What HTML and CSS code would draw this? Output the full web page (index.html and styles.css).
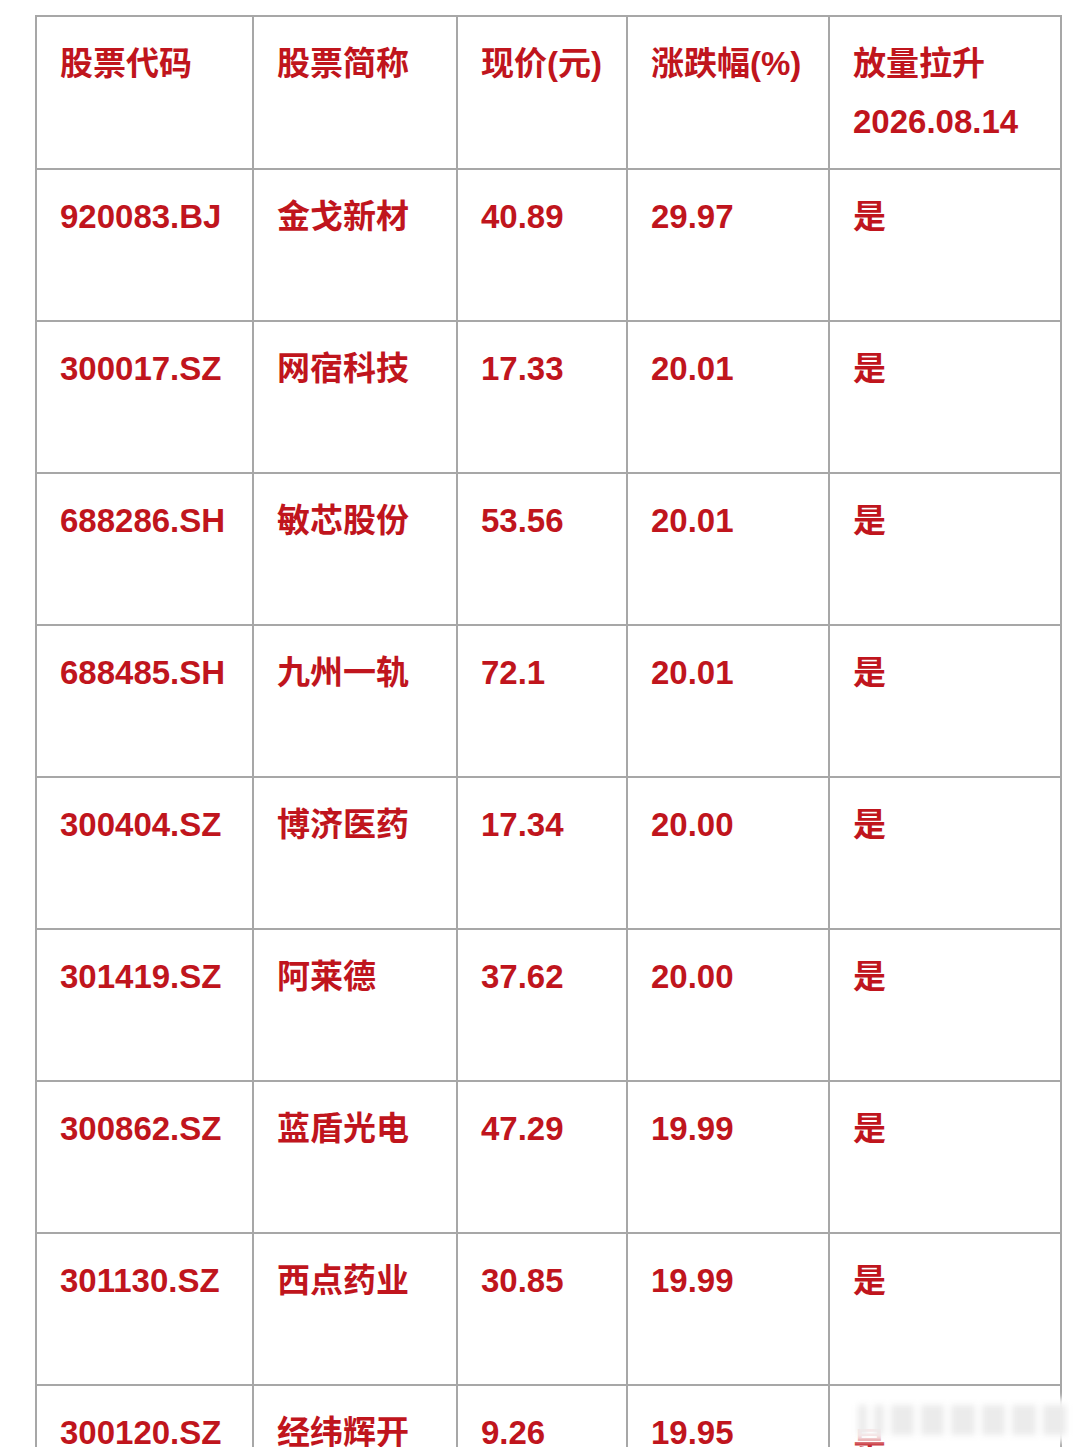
FILE: index.html
```html
<!DOCTYPE html>
<html lang="zh">
<head>
<meta charset="utf-8">
<title>放量拉升</title>
<link rel="stylesheet" href="styles.css">
</head>
<body>
<div class="page">
<table class="stocks">
  <colgroup>
    <col class="c1"><col class="c2"><col class="c3"><col class="c4"><col class="c5">
  </colgroup>
  <tr class="head">
    <td>股票代码</td><td>股票简称</td><td>现价(元)</td><td>涨跌幅(%)</td><td>放量拉升<br>2026.08.14</td>
  </tr>
  <tr><td>920083.BJ</td><td>金戈新材</td><td>40.89</td><td>29.97</td><td>是</td></tr>
  <tr><td>300017.SZ</td><td>网宿科技</td><td>17.33</td><td>20.01</td><td>是</td></tr>
  <tr><td>688286.SH</td><td>敏芯股份</td><td>53.56</td><td>20.01</td><td>是</td></tr>
  <tr><td>688485.SH</td><td>九州一轨</td><td>72.1</td><td>20.01</td><td>是</td></tr>
  <tr><td>300404.SZ</td><td>博济医药</td><td>17.34</td><td>20.00</td><td>是</td></tr>
  <tr><td>301419.SZ</td><td>阿莱德</td><td>37.62</td><td>20.00</td><td>是</td></tr>
  <tr><td>300862.SZ</td><td>蓝盾光电</td><td>47.29</td><td>19.99</td><td>是</td></tr>
  <tr><td>301130.SZ</td><td>西点药业</td><td>30.85</td><td>19.99</td><td>是</td></tr>
  <tr><td>300120.SZ</td><td>经纬辉开</td><td>9.26</td><td>19.95</td><td class="low">是</td></tr>
</table>
<div class="watermark"><span></span><span></span><span></span><span></span><span></span><span></span><span></span><span></span></div>
</div>
</body>
</html>
```

FILE: styles.css
```css
html, body {
  margin: 0;
  padding: 0;
  background: #ffffff;
}
.page {
  position: relative;
  width: 1080px;
  height: 1447px;
  overflow: hidden;
  padding: 15px 0 0 35px;
  box-sizing: border-box;
}
.stocks {
  border-collapse: collapse;
  table-layout: fixed;
  width: 1025px;
  font-family: "Liberation Sans", "Noto Sans CJK SC", sans-serif;
  font-weight: bold;
  font-size: 33px;
  line-height: 58px;
  color: #c0151d;
}
.c1 { width: 217px; }
.c2 { width: 204px; }
.c3 { width: 170px; }
.c4 { width: 202px; }
.c5 { width: 232px; }
.stocks tr { height: 152px; }
.stocks tr.head { height: 153px; }
.stocks td {
  border: 2px solid #a7a7a7;
  vertical-align: top;
  padding: 18px 0 0 23px;
  white-space: nowrap;
}
.stocks td.low { padding-top: 30px; }
.watermark {
  position: absolute;
  left: 852px;
  top: 1398px;
  width: 220px;
  height: 44px;
  display: flex;
  gap: 7px;
  align-items: center;
  padding: 0 6px;
  box-sizing: border-box;
  background: rgba(255,255,255,0.9);
  filter: blur(3px);
}
.watermark span {
  display: block;
  height: 30px;
  flex: 1;
  background: #ebebeb;
}
.watermark span:nth-child(1),
.watermark span:nth-child(2) { flex: 0.4; }
```
